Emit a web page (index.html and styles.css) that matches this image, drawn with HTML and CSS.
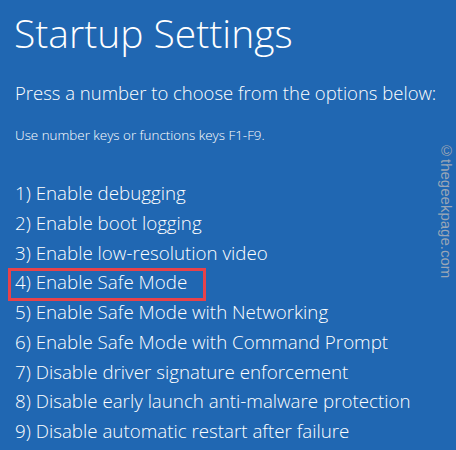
FILE: index.html
```html
<!DOCTYPE html>
<html>
<head>
<meta charset="utf-8">
<link rel="stylesheet" href="styles.css">
</head>
<body>
<main class="screen">
  <h1 class="title">Startup Settings</h1>
  <p class="lead">Press a number to choose from the options below:</p>
  <p class="hint">Use number keys or functions keys F1-F9.</p>
  <ol class="options">
    <li class="opt">1) Enable debugging</li>
    <li class="opt">2) Enable boot logging</li>
    <li class="opt">3) Enable low-resolution video</li>
    <li class="opt opt-marked">4) Enable Safe Mode</li>
    <li class="opt">5) Enable Safe Mode with Networking</li>
    <li class="opt">6) Enable Safe Mode with Command Prompt</li>
    <li class="opt">7) Disable driver signature enforcement</li>
    <li class="opt">8) Disable early launch anti-malware protection</li>
    <li class="opt">9) Disable automatic restart after failure</li>
  </ol>
  <div class="watermark">©thegeekpage.com</div>
</main>
</body>
</html>
```
FILE: styles.css
```css
html, body {
  margin: 0;
  padding: 0;
  background: #2067b2;
}
.screen {
  position: relative;
  width: 456px;
  height: 450px;
  overflow: hidden;
  background: #2067b2;
  color: #ffffff;
  font-family: "Open Sans", "Liberation Sans", sans-serif;
  padding: 0 0 0 14px;
  box-sizing: border-box;
}
.title {
  margin: 0;
  padding-top: 9px;
  font-size: 39px;
  font-weight: 300;
  line-height: 48px;
  white-space: nowrap;
}
.lead {
  margin: 24px 0 0 1px;
  font-size: 18.5px;
  font-weight: 300;
  line-height: 24px;
  white-space: nowrap;
}
.hint {
  margin: 22px 0 0 1px;
  font-size: 13.4px;
  font-weight: 300;
  line-height: 16px;
  white-space: nowrap;
}
.options {
  list-style: none;
  margin: 35px 0 0 0;
  padding: 0;
}
.opt {
  font-size: 18.75px;
  font-weight: 300;
  line-height: 29.75px;
  padding-left: 1px;
  white-space: nowrap;
}
.opt-marked {
  position: relative;
}
.opt-marked::after {
  content: "";
  position: absolute;
  left: -6px;
  top: 1px;
  width: 192px;
  height: 27px;
  border: 3px solid #e8424a;
}
.watermark {
  position: absolute;
  left: 438px;
  top: 142px;
  writing-mode: vertical-rl;
  font-family: "Liberation Sans", Arial, sans-serif;
  font-size: 15px;
  color: #9aa6b6;
  line-height: 16px;
}
```
